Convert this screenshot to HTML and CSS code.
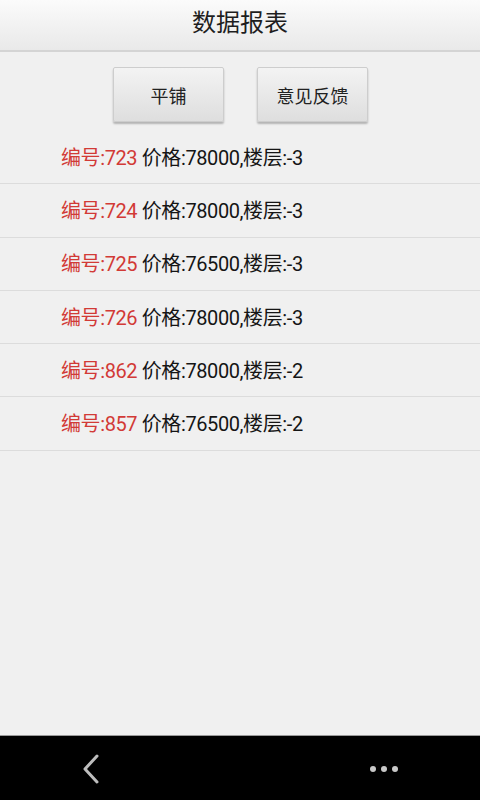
FILE: index.html
```html
<!DOCTYPE html>
<html lang="zh">
<head>
<meta charset="utf-8">
<title>数据报表</title>
<link rel="stylesheet" href="styles.css">
</head>
<body>
<div class="app">
  <header class="titlebar"><h1 class="title">数据报表</h1></header>
  <div class="actions">
    <button class="btn">平铺</button>
    <button class="btn">意见反馈</button>
  </div>
  <ul class="list">
    <li class="row"><span class="id">编号:723</span> 价格:78000,楼层:-3</li>
    <li class="row"><span class="id">编号:724</span> 价格:78000,楼层:-3</li>
    <li class="row"><span class="id">编号:725</span> 价格:76500,楼层:-3</li>
    <li class="row"><span class="id">编号:726</span> 价格:78000,楼层:-3</li>
    <li class="row"><span class="id">编号:862</span> 价格:78000,楼层:-2</li>
    <li class="row"><span class="id">编号:857</span> 价格:76500,楼层:-2</li>
  </ul>
  <div class="spacer"></div>
  <nav class="navbar">
    <svg class="back" width="20" height="32" viewBox="0 0 20 32"><polyline points="16,3 4,16 16,29" fill="none" stroke="#bdbdbd" stroke-width="3" stroke-linecap="round" stroke-linejoin="round"/></svg>
    <svg class="more" width="30" height="8" viewBox="0 0 30 8"><circle cx="4" cy="4" r="3" fill="#c8c8c8"/><circle cx="15" cy="4" r="3" fill="#c8c8c8"/><circle cx="26" cy="4" r="3" fill="#c8c8c8"/></svg>
  </nav>
</div>
</body>
</html>
```

FILE: styles.css
```css
* { box-sizing: border-box; }
html, body { margin: 0; padding: 0; }
body {
  background: #f0f0f0;
  font-family: Roboto, "Noto Sans CJK SC", "Noto Sans", sans-serif;
  color: #1a1a1a;
}
.app {
  width: 480px;
  height: 800px;
  display: flex;
  flex-direction: column;
}
.titlebar {
  height: 52px;
  background: linear-gradient(#fbfbfb, #e9e9e9);
  border-bottom: 2px solid #d4d4d4;
  display: flex;
  align-items: center;
  justify-content: center;
}
.title {
  margin: 0;
  font-size: 24px;
  font-weight: normal;
  color: #1e1e1e;
  line-height: 1;
  padding-bottom: 4px;
}
.actions {
  display: flex;
  justify-content: center;
  gap: 33px;
  padding-top: 15px;
  height: 79px;
  padding-left: 1px;
}
.btn {
  width: 111px;
  height: 55px;
  background: linear-gradient(#f3f3f3, #dedede);
  border: 1px solid #cdcdcd;
  border-radius: 2px;
  box-shadow: 0 2px 2px rgba(0,0,0,0.25);
  font-family: Roboto, "Noto Sans CJK SC", sans-serif;
  font-size: 18px;
  color: #222;
  padding: 0;
}
.list {
  list-style: none;
  margin: 0;
  padding: 0;
}
.row {
  height: 53.3px;
  border-bottom: 1px solid #dcdcdc;
  padding-left: 61px;
  display: flex;
  align-items: center;
  font-size: 20px;
  letter-spacing: -0.4px;
  white-space: pre;
  color: #151515;
  padding-bottom: 2px;
}
.id { color: #d23a36; }
.spacer { flex: 1; }
.navbar {
  height: 65px;
  background: #000;
  border-top: 1px solid #9a9a9a;
  display: flex;
  align-items: center;
  position: relative;
}
.back {
  margin-left: 81px;
  margin-top: 2px;
}
.more {
  margin-left: auto;
  margin-right: 81px;
  margin-top: 2px;
}
```
